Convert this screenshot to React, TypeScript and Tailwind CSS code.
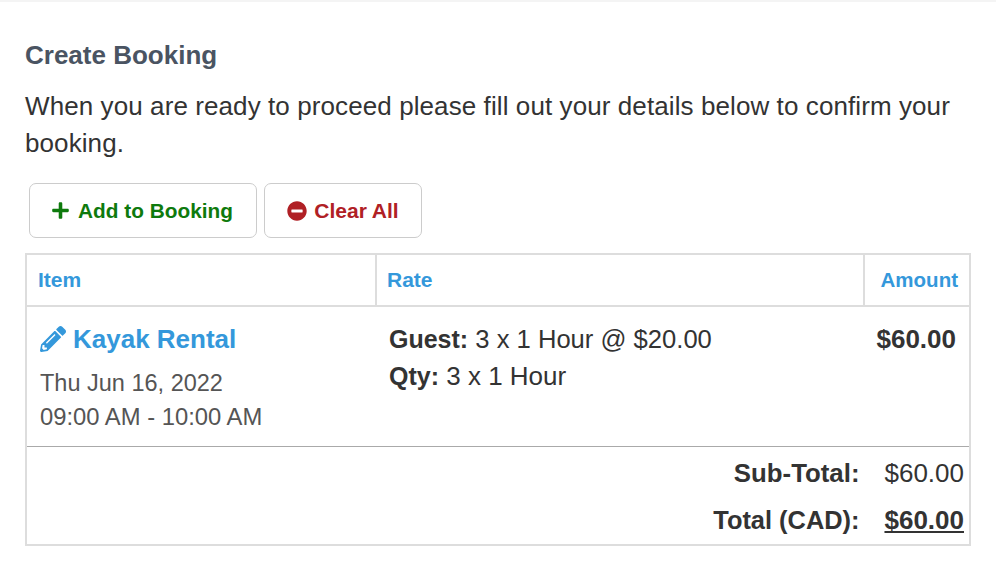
import React from 'react';
import { FaMinusCircle, FaPencilAlt, FaPlus } from 'react-icons/fa';

const App: React.FC = () => {
  return (
    <div className="w-[996px] h-[562px] overflow-hidden bg-white font-['Liberation_Sans',Arial,sans-serif] text-[#333]">
      <div className="h-[2px] bg-[#f4f4f4]" />
      <div className="pl-[25px] pr-[25px] pt-[38px]">
        <h2 className="text-[26px] leading-[30px] font-bold text-[#4a5462]">Create Booking</h2>
        <p className="mt-[18px] text-[26px] leading-[37px] tracking-[0.09px]">
          When you are ready to proceed please fill out your details below to confirm your booking.
        </p>

        <div className="mt-[21px] ml-[4px] flex gap-[7px]">
          <button className="flex h-[55px] w-[228px] items-center justify-center gap-[8px] rounded-[7px] border border-[#ccc] bg-white pr-[2px] text-[20.8px] font-bold text-[#0e7a0d]">
            <FaPlus className="h-[19px] w-[19px]" />
            Add to Booking
          </button>
          <button className="flex h-[55px] w-[158px] items-center justify-center gap-[7px] rounded-[7px] border border-[#ccc] bg-white text-[21px] font-bold text-[#b02025]">
            <FaMinusCircle className="h-[20px] w-[20px]" />
            Clear All
          </button>
        </div>

        <div className="mt-[15px] border-2 border-[#ddd]">
          <div className="grid h-[52px] grid-cols-[348px_488px_1fr] border-b-2 border-[#ddd] text-[21px] font-bold text-[#3498db]">
            <div className="flex items-center pl-[11px]">Item</div>
            <div className="flex items-center border-l-2 border-[#ddd] pl-[10px]">Rate</div>
            <div className="flex items-center justify-end border-l-2 border-[#ddd] pr-[11px] text-[20.5px]">Amount</div>
          </div>

          <div className="grid h-[140px] grid-cols-[350px_1fr_auto] border-b border-[#aaa] pt-[14px]">
            <div className="pt-[1px] pl-[13px]">
              <div className="flex h-[34px] items-center gap-[7px] text-[26px] font-bold text-[#3498db]">
                <FaPencilAlt className="h-[26px] w-[26px]" />
                Kayak Rental
              </div>
              <div className="mt-[11px] text-[23.8px] leading-[33px] text-[#555]">
                <div className="text-[23.5px]">Thu Jun 16, 2022</div>
                <div>09:00 AM - 10:00 AM</div>
              </div>
            </div>
            <div className="pl-[12px] text-[26px] leading-[37px]">
              <div className="text-[25.6px]"><b className="text-[25px]">Guest:</b> 3 x 1 Hour @ $20.00</div>
              <div><b className="text-[25px]">Qty:</b> 3 x 1 Hour</div>
            </div>
            <div className="pr-[13px] text-[26px] leading-[37px] font-bold">$60.00</div>
          </div>

          <div className="grid grid-cols-[1fr_auto] items-center gap-x-[25px] pr-[5px] pt-[3px] text-[26px] leading-[47px]">
            <div className="text-right text-[25.8px] font-bold">Sub-Total:</div>
            <div>$60.00</div>
            <div className="text-right font-bold text-[25.4px]">Total (CAD):</div>
            <div className="font-bold underline">$60.00</div>
          </div>
        </div>
      </div>
    </div>
  );
};

export default App;
